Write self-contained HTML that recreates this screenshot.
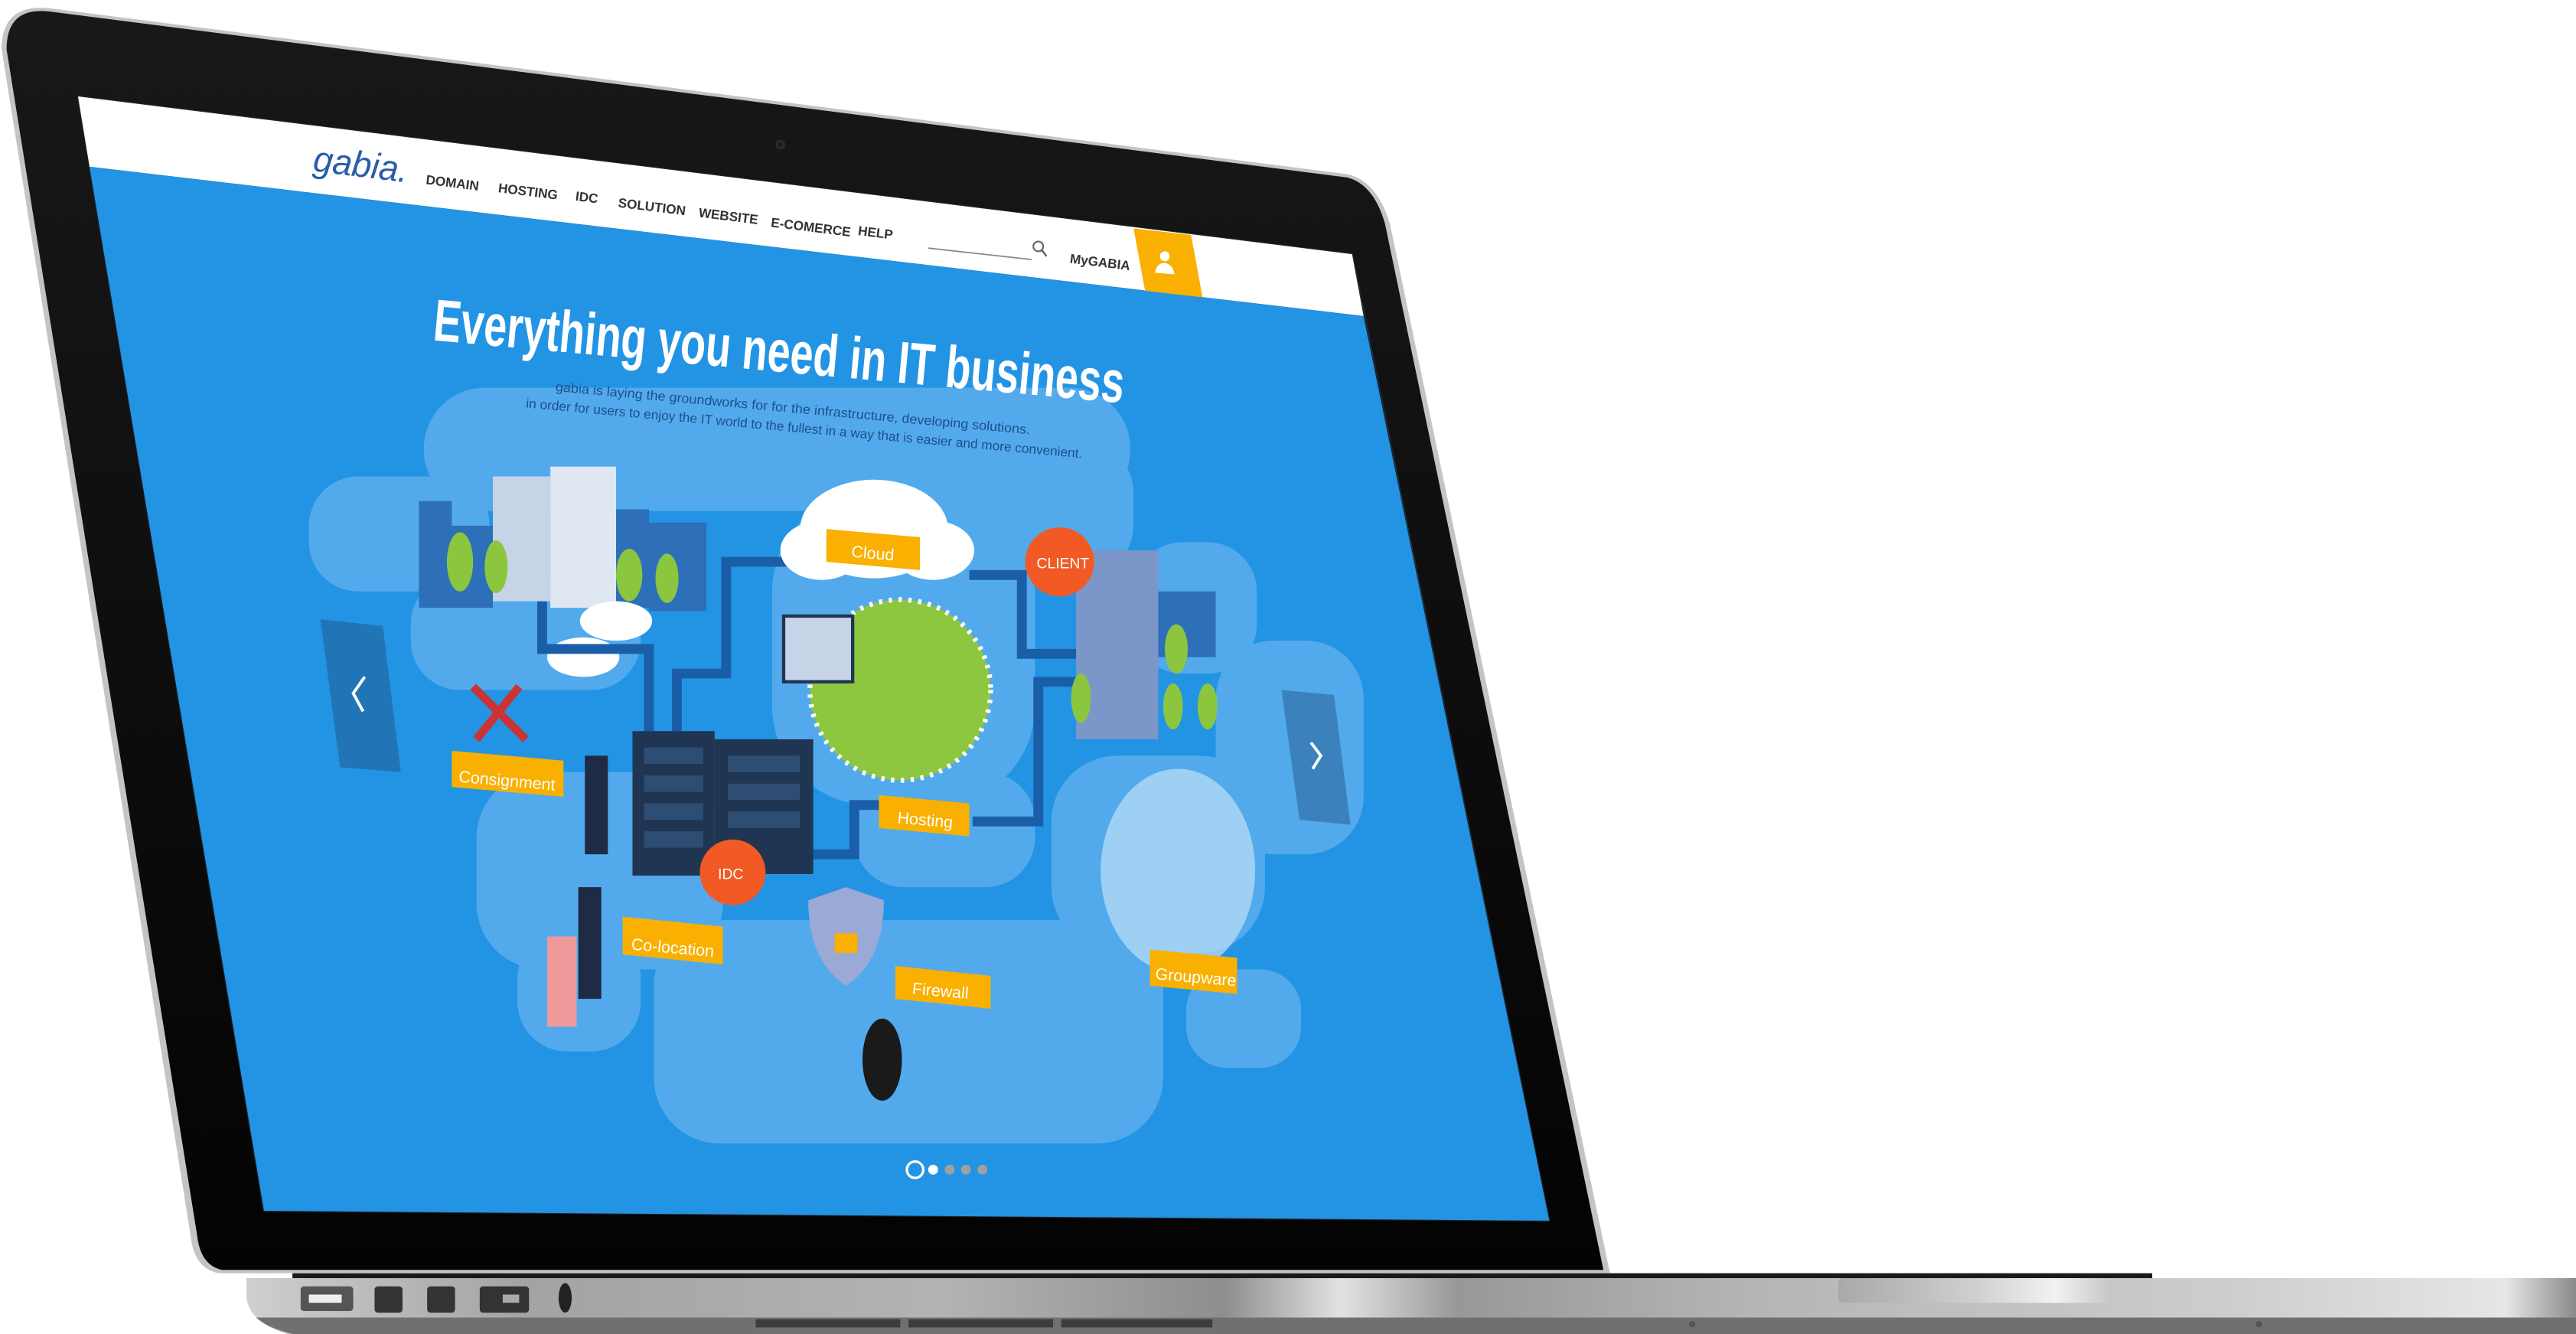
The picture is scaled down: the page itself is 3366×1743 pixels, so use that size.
<!DOCTYPE html>
<html><head><meta charset="utf-8"><style>
html,body{margin:0;padding:0;background:#fff;width:3366px;height:1743px;overflow:hidden}
svg{display:block}
text{font-family:"Liberation Sans",sans-serif}
</style></head><body>
<svg width="3366" height="1743" viewBox="0 0 1568 812" preserveAspectRatio="none" xmlns="http://www.w3.org/2000/svg">
<defs>
<linearGradient id="bez" x1="0" y1="0" x2="0" y2="1">
<stop offset="0" stop-color="#181818"/><stop offset="0.6" stop-color="#0c0c0c"/><stop offset="1" stop-color="#030303"/>
</linearGradient>
<linearGradient id="base" x1="0" y1="0" x2="1" y2="0">
<stop offset="0" stop-color="#cfcfcf"/><stop offset="0.12" stop-color="#a3a3a3"/><stop offset="0.3" stop-color="#b3b3b3"/>
<stop offset="0.42" stop-color="#8e8e8e"/><stop offset="0.47" stop-color="#e2e2e2"/><stop offset="0.52" stop-color="#989898"/>
<stop offset="0.65" stop-color="#b6b6b6"/><stop offset="0.85" stop-color="#cdcdcd"/><stop offset="0.97" stop-color="#e6e6e6"/><stop offset="1" stop-color="#8a8a8a"/>
</linearGradient>
<linearGradient id="pad" x1="0" y1="0" x2="1" y2="0">
<stop offset="0" stop-color="#a8a8a8"/><stop offset="0.5" stop-color="#cfcfcf"/><stop offset="0.8" stop-color="#f2f2f2"/><stop offset="1" stop-color="#c8c8c8"/>
</linearGradient>
</defs>

<path d="M150,778 L1568,778 L1568,812 L175,812 Q152,805 150,790 Z" fill="url(#base)"/>
<path d="M156,802 L1568,802 L1568,812 L178,812 Q162,808 156,802 Z" fill="#707070"/>
<rect x="1119" y="778" width="165" height="15" rx="3" fill="url(#pad)"/>
<rect x="178" y="775" width="1132" height="3" fill="#1a1a1a"/>
<rect x="460" y="803" width="88" height="5" fill="#3c3c3c"/><rect x="553" y="803" width="88" height="5" fill="#3c3c3c"/><rect x="646" y="803" width="92" height="5" fill="#3c3c3c"/>
<circle cx="1030" cy="806" r="2" fill="#555"/><circle cx="1375" cy="806" r="2" fill="#555"/>
<rect x="183" y="783" width="32" height="15" rx="2" fill="#555"/><rect x="188" y="788" width="20" height="5" fill="#eee"/>
<rect x="228" y="783" width="17" height="16" rx="2" fill="#333"/><rect x="260" y="783" width="17" height="16" rx="2" fill="#333"/>
<rect x="292" y="783" width="30" height="16" rx="2" fill="#333"/><rect x="306" y="788" width="10" height="5" fill="#aaa"/>
<ellipse cx="344" cy="790" rx="4" ry="9" fill="#222"/>

<path d="M1,30 Q1,2 30,5 L820,106 Q838,110 846,136 L980,775 L133,775 Q118,772 116,752 Z" fill="#c4c4c4"/>
<path d="M4,30 Q4,4 30,7 L820,108 Q836,112 843,136 L976,773 L135,773 Q122,770 120,752 Z" fill="url(#bez)"/>
<path d="M47.5,58.7 L823,154.7 L943,743 L160.7,737 Z" fill="#000" stroke="#1f2a35" stroke-width="1"/>
<circle cx="475" cy="88" r="3" fill="#2a2a2a"/><circle cx="475" cy="88" r="1.3" fill="#0d1a2a"/>

<path d="M47.5,58.7 L823,154.7 L830,192.4 L54.5,101.5 Z" fill="#fff"/>
<path d="M54.5,101.5 L830,192.4 L943,743 L160.7,737 Z" fill="#2394e4"/>
<path d="M690,139 L725,143 L732,181 L697,177 Z" fill="#f9b000"/>
<circle cx="709" cy="156" r="3" fill="#fff"/><path d="M703,166 Q704,160 709,160 Q714,161 715,167 Z" fill="#fff"/>

<text x="190" y="104" font-size="22" fill="#2a5da8" font-style="italic" transform="rotate(7,190,104)" textLength="58" lengthAdjust="spacingAndGlyphs">gabia.</text>
<g font-size="8" font-weight="bold" fill="#333">
<text x="259" y="112" transform="rotate(7,259,112)">DOMAIN</text>
<text x="303" y="117" transform="rotate(7,303,117)">HOSTING</text>
<text x="350" y="122" transform="rotate(7,350,122)">IDC</text>
<text x="376" y="126" transform="rotate(7,376,126)">SOLUTION</text>
<text x="425" y="132" transform="rotate(7,425,132)">WEBSITE</text>
<text x="469" y="138" transform="rotate(7,469,138)">E-COMERCE</text>
<text x="522" y="143" transform="rotate(7,522,143)">HELP</text>
<text x="651" y="160" transform="rotate(7,651,160)">MyGABIA</text>
</g>
<line x1="565" y1="151" x2="628" y2="158" stroke="#888" stroke-width="0.8"/>
<circle cx="632" cy="150" r="3" fill="none" stroke="#666" stroke-width="1"/><line x1="634" y1="152" x2="637" y2="156" stroke="#666" stroke-width="1.2"/>

<g fill="#52aaec">
<rect x="258" y="236" width="430" height="75" rx="37"/>
<rect x="188" y="290" width="110" height="70" rx="30"/>
<rect x="250" y="350" width="140" height="70" rx="30"/>
<rect x="290" y="470" width="150" height="120" rx="40"/>
<rect x="315" y="565" width="75" height="75" rx="30"/>
<rect x="398" y="560" width="310" height="136" rx="40"/>
<rect x="580" y="270" width="110" height="80" rx="30"/>
<rect x="690" y="330" width="75" height="80" rx="30"/>
<rect x="740" y="390" width="90" height="130" rx="35"/>
<rect x="722" y="590" width="70" height="60" rx="25"/>
<rect x="640" y="460" width="130" height="120" rx="40"/>
<rect x="470" y="300" width="160" height="190" rx="60"/>
<rect x="520" y="470" width="110" height="70" rx="30"/>
</g>

<text x="263" y="207" font-size="36" fill="#fff" font-weight="600" transform="rotate(5.2,263,207)" textLength="422" lengthAdjust="spacingAndGlyphs">Everything you need in IT business</text>
<g font-size="8" fill="#1d4f8c">
<text x="338" y="238" transform="rotate(5.2,338,238)" textLength="290" lengthAdjust="spacingAndGlyphs">gabia is laying the groundworks for for the infrastructure, developing solutions.</text>
<text x="320" y="248" transform="rotate(5.2,320,248)" textLength="340" lengthAdjust="spacingAndGlyphs">in order for users to enjoy the IT world to the fullest in a way that is easier and more convenient.</text>
</g>

<g fill="#2d6fb9">
<rect x="255" y="305" width="20" height="65"/><rect x="275" y="320" width="25" height="50"/><rect x="370" y="310" width="25" height="60"/><rect x="395" y="318" width="35" height="54"/>
</g>
<rect x="300" y="290" width="35" height="76" fill="#c7d3e6"/><rect x="335" y="284" width="40" height="86" fill="#dfe7f2"/>
<g fill="#8cc63f"><ellipse cx="280" cy="342" rx="8" ry="18"/><ellipse cx="302" cy="345" rx="7" ry="16"/><ellipse cx="383" cy="350" rx="8" ry="16"/><ellipse cx="406" cy="352" rx="7" ry="15"/></g>
<g fill="#fff"><ellipse cx="375" cy="378" rx="22" ry="12"/><ellipse cx="355" cy="400" rx="22" ry="12"/></g>

<g fill="none" stroke="#1b5ea8" stroke-width="6">
<path d="M330,366 V395 H395 V445"/><path d="M412,445 V410 H442 V342 H480"/>
<path d="M590,350 H622 V398 H662"/><path d="M592,500 H632 V415 H656"/><path d="M495,520 H520 V490 H545"/>
</g>
<g fill="#fff"><ellipse cx="532" cy="322" rx="45" ry="30"/><ellipse cx="500" cy="335" rx="25" ry="18"/><ellipse cx="568" cy="335" rx="25" ry="18"/></g>
<circle cx="548" cy="420" r="55" fill="#8dc63f"/>
<circle cx="548" cy="420" r="55" fill="none" stroke="#fff" stroke-width="3" stroke-dasharray="2 4"/>
<rect x="477" y="375" width="42" height="40" fill="#c7d3e6" stroke="#1f3552" stroke-width="2"/>
<rect x="385" y="445" width="50" height="88" fill="#1f3552"/><rect x="435" y="450" width="60" height="82" fill="#1f3552"/>
<g fill="#2e4d72"><rect x="392" y="455" width="36" height="10"/><rect x="392" y="472" width="36" height="10"/><rect x="392" y="489" width="36" height="10"/><rect x="392" y="506" width="36" height="10"/><rect x="443" y="460" width="44" height="10"/><rect x="443" y="477" width="44" height="10"/><rect x="443" y="494" width="44" height="10"/></g>
<rect x="655" y="335" width="50" height="115" fill="#7b96c8"/>
<g fill="#2d6fb9"><rect x="705" y="360" width="35" height="40"/></g>
<g fill="#8cc63f"><ellipse cx="658" cy="425" rx="6" ry="15"/><ellipse cx="716" cy="395" rx="7" ry="15"/><ellipse cx="714" cy="430" rx="6" ry="14"/><ellipse cx="735" cy="430" rx="6" ry="14"/></g>
<ellipse cx="717" cy="530" rx="47" ry="62" fill="#bfe0f7" opacity="0.7"/>
<path d="M492,548 L515,540 L538,548 Q538,585 515,600 Q492,585 492,548 Z" fill="#9aa9d6"/>
<rect x="508" y="568" width="14" height="12" fill="#f9b000"/>
<ellipse cx="537" cy="645" rx="12" ry="25" fill="#1a1a1a"/>
<rect x="356" y="460" width="14" height="60" fill="#1f2b44"/><rect x="352" y="540" width="14" height="68" fill="#1f2b44"/><rect x="333" y="570" width="18" height="55" fill="#e99"/>
<path d="M288,418 L320,450 M316,418 L290,450" stroke="#c33" stroke-width="5"/>

<g fill="#f9b000">
<path d="M503,322 L560,327 L560,347 L503,342 Z"/>
<path d="M275,457 L343,463 L343,485 L275,479 Z"/>
<path d="M535,484 L590,489 L590,509 L535,504 Z"/>
<path d="M379,558 L440,564 L440,587 L379,581 Z"/>
<path d="M545,588 L603,594 L603,614 L545,608 Z"/>
<path d="M700,578 L753,583 L753,605 L700,600 Z"/>
</g>
<g fill="#f15a24"><circle cx="645" cy="342" r="21"/><circle cx="446" cy="531" r="20"/></g>
<g font-size="10" fill="#fff">
<text x="518" y="339" transform="rotate(5,518,339)">Cloud</text>
<text x="279" y="476" transform="rotate(5,279,476)">Consignment</text>
<text x="546" y="501" transform="rotate(5,546,501)">Hosting</text>
<text x="384" y="578" transform="rotate(5,384,578)">Co-location</text>
<text x="555" y="605" transform="rotate(5,555,605)">Firewall</text>
<text x="703" y="596" transform="rotate(5,703,596)">Groupware</text>
<text x="631" y="346" font-size="9">CLIENT</text>
<text x="437" y="535" font-size="9">IDC</text>
</g>

<path d="M195,377 L233,381 L244,470 L207,467 Z" fill="#1f4f80" opacity="0.45"/>
<path d="M222,412 L215,422 L221,433" fill="none" stroke="#fff" stroke-width="1.8"/>
<path d="M780,420 L812,423 L822,502 L791,499 Z" fill="#1f4f80" opacity="0.45"/>
<path d="M798,452 L804,460 L799,468" fill="none" stroke="#fff" stroke-width="1.8"/>
<circle cx="557" cy="712" r="5" fill="none" stroke="#fff" stroke-width="1.5"/>
<circle cx="568" cy="712" r="3" fill="#fff"/><circle cx="578" cy="712" r="3" fill="#a0a0a0"/><circle cx="588" cy="712" r="3" fill="#a0a0a0"/><circle cx="598" cy="712" r="3" fill="#a0a0a0"/>
</svg>
</body></html>
